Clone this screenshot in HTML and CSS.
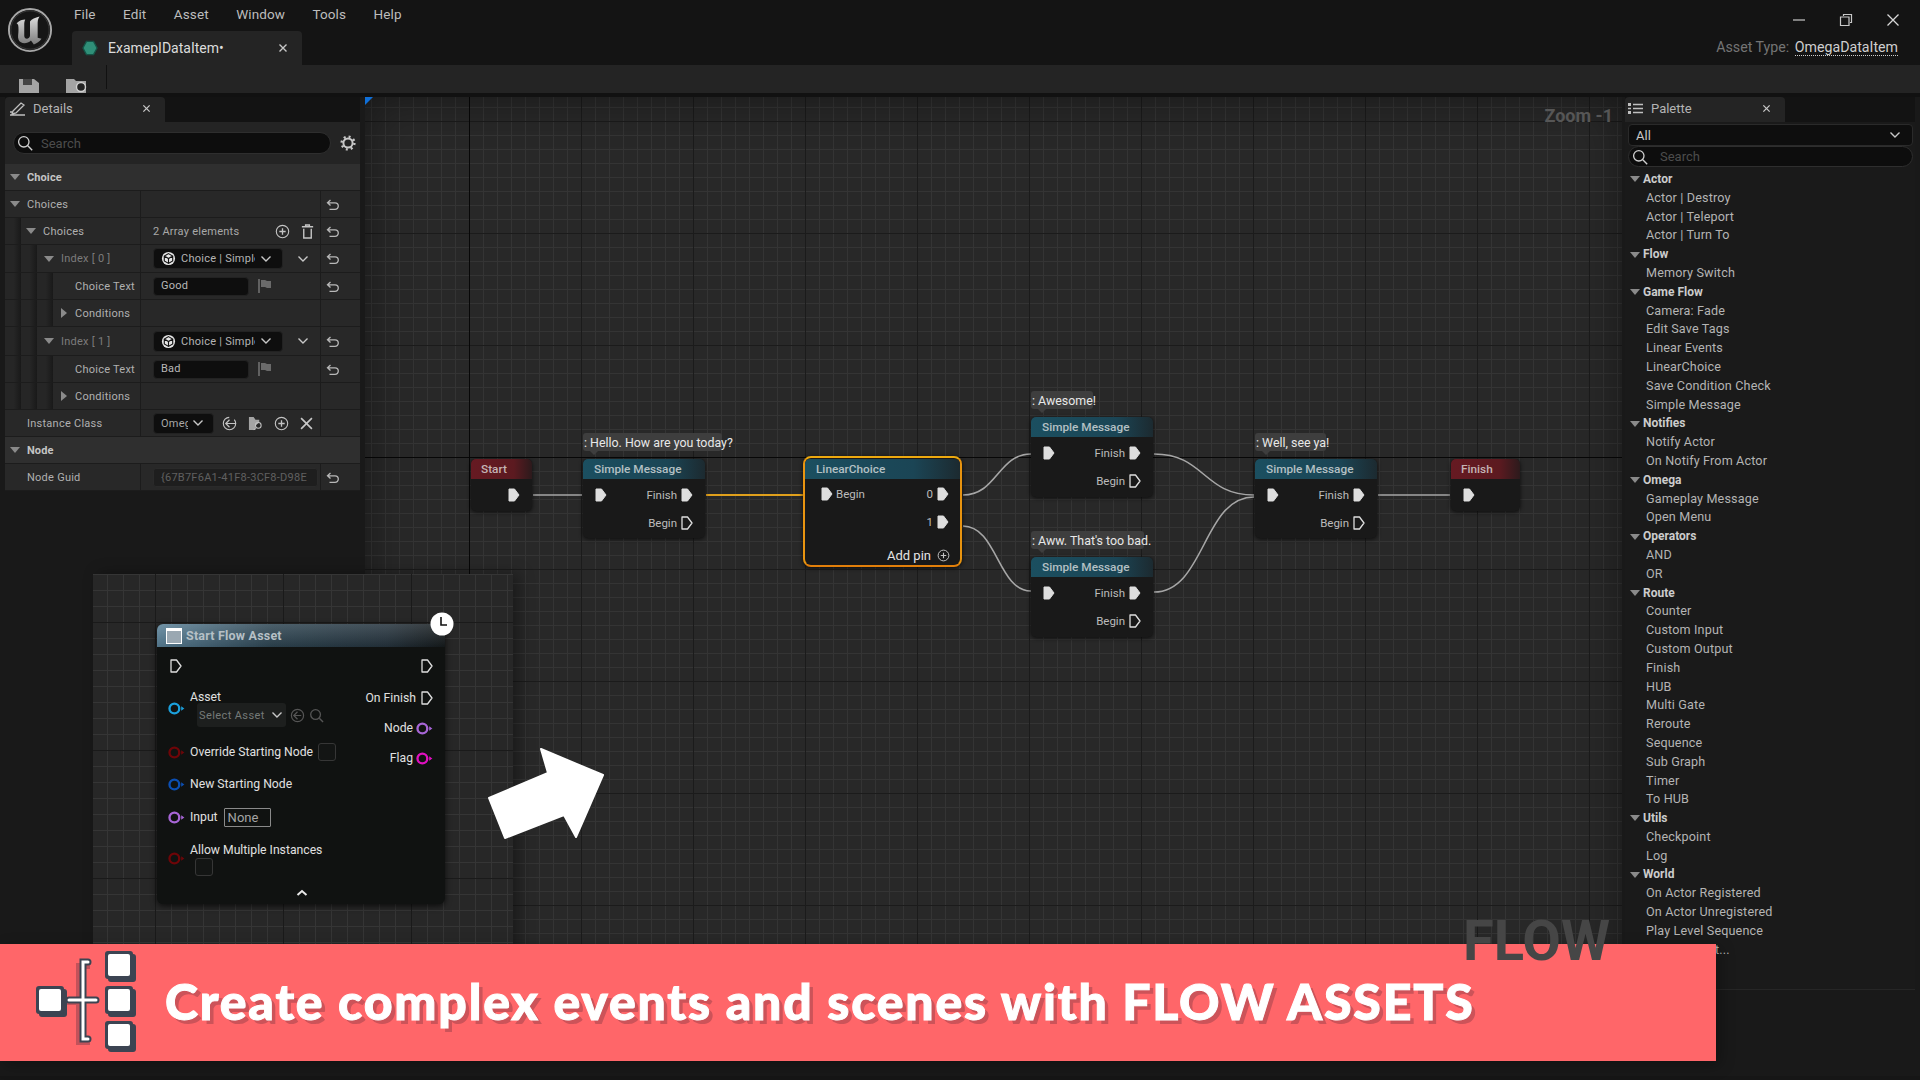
FILE: index.html
```html
<!DOCTYPE html>
<html lang="en">
<head>
<meta charset="utf-8">
<title>ExamepIDataItem</title>
<link rel="stylesheet" href="styles.css">
</head>
<body>
<svg class="defs" aria-hidden="true">
  <defs><linearGradient id="ug" x1="0" y1="0" x2="0" y2="1"><stop offset="0" stop-color="#dcdcdc"/><stop offset="1" stop-color="#7c7c7c"/></linearGradient></defs>
  <symbol id="exec" viewBox="0 0 12 14"><path d="M1 1h5.5L11 7l-4.5 6H1z" fill="#dedede" stroke="#dedede" stroke-linejoin="round"/></symbol>
  <symbol id="execo" viewBox="0 0 12 14"><path d="M1 1h5.5L11 7l-4.5 6H1z" fill="none" stroke="#dedede" stroke-width="1.3" stroke-linejoin="round"/></symbol>
  <symbol id="data" viewBox="0 0 16 14"><circle cx="6" cy="7" r="4.6" fill="none" stroke="currentColor" stroke-width="2.2"/><path d="M12.4 4.8 15.4 7l-3 2.2z" fill="currentColor"/></symbol>
  <symbol id="reset" viewBox="0 0 14 12"><path d="M4.5 1 1.5 3.8l3 2.8M1.8 3.8H9a3.2 3.2 0 0 1 0 6.6H3.5" fill="none" stroke="#b8b8b8" stroke-width="1.3"/></symbol>
  <symbol id="down" viewBox="0 0 10 10"><path d="M0 2h10L5 8z" fill="#8a8a8a"/></symbol>
  <symbol id="right" viewBox="0 0 10 10"><path d="M2 0v10l6-5z" fill="#8a8a8a"/></symbol>
  <symbol id="chev" viewBox="0 0 12 8"><path d="M1.5 1.5 6 6l4.5-4.5" fill="none" stroke="#c8c8c8" stroke-width="1.4"/></symbol>
  <symbol id="plus" viewBox="0 0 16 16"><circle cx="8" cy="8" r="6.6" fill="none" stroke="#c4c4c4" stroke-width="1.2"/><path d="M8 4.6v6.8M4.6 8h6.8" stroke="#c4c4c4" stroke-width="1.4"/></symbol>
  <symbol id="search" viewBox="0 0 16 16"><circle cx="6.8" cy="6.8" r="5.2" fill="none" stroke="#d0d0d0" stroke-width="1.3"/><path d="m10.8 10.8 4.4 4.4" stroke="#d0d0d0" stroke-width="1.4"/></symbol>
  <symbol id="cube" viewBox="0 0 16 16"><circle cx="8" cy="8" r="7" fill="#e6e6e6"/><path d="M8 2.8 12.5 5.4v5.2L8 13.2l-4.5-2.6V5.4zM3.5 5.4 8 8l4.5-2.6M8 8v5.2" fill="none" stroke="#111" stroke-width="1.2"/></symbol>
  <symbol id="flag" viewBox="0 0 14 14"><path d="M1 0v14" stroke="#9a9a9a"/><path d="M3 1h4l2 1h4v7H9L7 8H3z" fill="#6a6a6a"/></symbol>
  <symbol id="close" viewBox="0 0 10 10"><path d="m1.5 1.5 7 7m0-7-7 7" stroke="#c8c8c8" stroke-width="1.4"/></symbol>
</svg>

<div class="app">
  <header class="topbar">
    <div class="logo-box">
      <svg class="logo" viewBox="0 0 48 48"><circle cx="24" cy="24" r="22" fill="#161616" stroke="#a8a8a8" stroke-width="2"/><circle cx="24" cy="24" r="20" fill="none" stroke="#3a3a3a"/><path d="M10 17c3-3 6-4 9-4-1 2-1 4-1 6v11c0 3 3 4 5 2 1-1 1-2 1-3V15c2-2 5-4 10-5-2 3-2 5-2 8v14l4 1c-2 3-5 5-8 6l-3-4c-4 4-11 4-13-1-1-3 0-6 0-10 0-4 0-6-2-7z" fill="url(#ug)"/></svg>
    </div>
    <div class="top-main">
      <nav class="menu">
        <span>File</span><span>Edit</span><span>Asset</span><span>Window</span><span>Tools</span><span>Help</span>
        <div class="winctl">
          <svg viewBox="0 0 14 14"><path d="M1 7h12" stroke="#c8c8c8" stroke-width="1.2"/></svg>
          <svg viewBox="0 0 14 14"><path d="M4.5 3V1.5h8v8H11M1.5 4h8.5v8.5H1.5z" fill="none" stroke="#c8c8c8" stroke-width="1.2"/></svg>
          <svg viewBox="0 0 14 14"><path d="m1.5 1.5 11 11m0-11-11 11" stroke="#d8d8d8" stroke-width="1.3"/></svg>
        </div>
      </nav>
      <div class="tabline">
        <div class="doc-tab">
          <svg class="hex" viewBox="0 0 18 18"><path d="M5 1.5h8L17 9l-4 7.5H5L1 9z" fill="#2f8f78" stroke="#155245" stroke-width="1.5"/></svg>
          <span class="doc-name">ExamepIDataItem•</span>
          <svg class="doc-x"><use href="#close"/></svg>
        </div>
        <div class="asset-type"><span class="at-l">Asset Type:</span> <span class="at-v">OmegaDataItem</span></div>
      </div>
    </div>
  </header>

  <div class="toolbar">
    <svg class="tool-ic" viewBox="0 0 22 22"><path d="M1 3h15l5 4v15H1z" fill="#a4a4a4"/><path d="M5 3h9v6H5z" fill="#444"/></svg>
    <svg class="tool-ic ti2" viewBox="0 0 22 22"><path d="M0 3h8l2 2h10v17H0z" fill="#a4a4a4"/><circle cx="15" cy="11" r="4.5" fill="#242424" stroke="#d0d0d0" stroke-width="1.4"/></svg>
    <i class="tool-div"></i>
  </div>

  <main class="work">
    <aside class="details">
      <div class="tabstrip">
        <div class="ptab">
          <svg class="ptab-ic" viewBox="0 0 16 14"><path d="M3 9 11 1l3 2-8 8-4 1zM0 13h15M0 10h3" fill="none" stroke="#c0c0c0" stroke-width="1.3"/></svg>
          <span>Details</span>
          <svg class="ptab-x"><use href="#close"/></svg>
        </div>
      </div>
      <div class="d-search">
        <div class="searchbox sb-d"><svg class="sic"><use href="#search"/></svg><span>Search</span></div>
        <svg class="gear" viewBox="0 0 16 16"><circle cx="8" cy="8" r="4.6" fill="none" stroke="#c8c8c8" stroke-width="2"/><circle cx="8" cy="8" r="6.4" fill="none" stroke="#c8c8c8" stroke-width="2.4" stroke-dasharray="2 3"/></svg>
      </div>

      <div class="section"><svg class="ar"><use href="#down"/></svg>Choice</div>
      <div class="row">
        <div class="name"><div class="lab"><svg class="ar"><use href="#down"/></svg>Choices</div></div>
        <div class="val"></div><div class="rs"><svg class="rsi"><use href="#reset"/></svg></div>
      </div>
      <div class="row">
        <div class="name"><i class="strip"></i><div class="lab"><svg class="ar"><use href="#down"/></svg>Choices</div></div>
        <div class="val"><span class="count">2 Array elements</span><svg class="vic i-plus"><use href="#plus"/></svg>
          <svg class="vic i-trash" viewBox="0 0 14 16"><path d="M1 3h12M5 3V1h4v2M3 5v10h8V5" fill="none" stroke="#c4c4c4" stroke-width="1.5"/></svg></div>
        <div class="rs"><svg class="rsi"><use href="#reset"/></svg></div>
      </div>
      <div class="row row-t">
        <div class="name"><i class="strip"></i><i class="strip"></i><div class="lab dim"><svg class="ar ar-i"><use href="#down"/></svg>Index [ 0 ]</div></div>
        <div class="val"><div class="picker"><svg class="cube"><use href="#cube"/></svg><span class="clip">Choice | Simple</span><svg class="chev"><use href="#chev"/></svg></div><svg class="chev c2"><use href="#chev"/></svg></div>
        <div class="rs"><svg class="rsi"><use href="#reset"/></svg></div>
      </div>
      <div class="row">
        <div class="name"><i class="strip"></i><i class="strip"></i><i class="strip"></i><div class="lab lv3">Choice Text</div></div>
        <div class="val"><div class="textin">Good</div><svg class="flag"><use href="#flag"/></svg></div>
        <div class="rs"><svg class="rsi"><use href="#reset"/></svg></div>
      </div>
      <div class="row">
        <div class="name"><i class="strip"></i><i class="strip"></i><i class="strip"></i><div class="lab"><svg class="ar ar-r"><use href="#right"/></svg>Conditions</div></div>
        <div class="val"></div><div class="rs"></div>
      </div>
      <div class="row row-u">
        <div class="name"><i class="strip"></i><i class="strip"></i><div class="lab dim"><svg class="ar ar-i"><use href="#down"/></svg>Index [ 1 ]</div></div>
        <div class="val"><div class="picker"><svg class="cube"><use href="#cube"/></svg><span class="clip">Choice | Simple</span><svg class="chev"><use href="#chev"/></svg></div><svg class="chev c2"><use href="#chev"/></svg></div>
        <div class="rs"><svg class="rsi"><use href="#reset"/></svg></div>
      </div>
      <div class="row">
        <div class="name"><i class="strip"></i><i class="strip"></i><i class="strip"></i><div class="lab lv3">Choice Text</div></div>
        <div class="val"><div class="textin">Bad</div><svg class="flag"><use href="#flag"/></svg></div>
        <div class="rs"><svg class="rsi"><use href="#reset"/></svg></div>
      </div>
      <div class="row">
        <div class="name"><i class="strip"></i><i class="strip"></i><i class="strip"></i><div class="lab"><svg class="ar ar-r"><use href="#right"/></svg>Conditions</div></div>
        <div class="val"></div><div class="rs"></div>
      </div>
      <div class="row">
        <div class="name"><div class="lab lv0">Instance Class</div></div>
        <div class="val"><div class="combo"><span class="clip2">Omega</span><svg class="chev"><use href="#chev"/></svg></div>
          <svg class="vic i-use" viewBox="0 0 16 16"><circle cx="8" cy="8" r="6.6" fill="none" stroke="#c4c4c4" stroke-width="1.2" stroke-dasharray="30 6"/><path d="M8 4 4 8l4 4M4 8h11" fill="none" stroke="#c4c4c4" stroke-width="1.3"/></svg>
          <svg class="vic i-fold" viewBox="0 0 16 16"><path d="M1 1h5l2 3h4v3l-4 3v5H1z" fill="#a4a4a4"/><circle cx="11" cy="10" r="3" fill="none" stroke="#c4c4c4" stroke-width="1.1"/><path d="m9 12-3 3" stroke="#c4c4c4"/></svg>
          <svg class="vic i-plus2"><use href="#plus"/></svg>
          <svg class="vic i-x" viewBox="0 0 12 12"><path d="m1 1 10 10m0-10L1 11" stroke="#c8c8c8" stroke-width="1.5"/></svg></div>
        <div class="rs"></div>
      </div>
      <div class="section"><svg class="ar"><use href="#down"/></svg>Node</div>
      <div class="row">
        <div class="name"><div class="lab lv0">Node Guid</div></div>
        <div class="val"><div class="guid">{67B7F6A1-41F8-3CF8-D98E</div></div>
        <div class="rs"><svg class="rsi"><use href="#reset"/></svg></div>
      </div>
    </aside>

    <section class="graph">
      <i class="corner"></i>
      <i class="origin-x"></i><i class="origin-y"></i>
      <div class="zoom">Zoom -1</div>
      <div class="watermark">FLOW</div>
      <svg class="wires" viewBox="365 97 1257 958">
        <g fill="none" stroke="#a6a6a6" stroke-width="1.6">
          <path d="M533 495H582"/>
          <path d="M963 495C997 495 998 454 1031 454"/>
          <path d="M963 526C997 526 998 591 1031 591"/>
          <path d="M1154 454C1205 454 1203 495 1254 495"/>
          <path d="M1154 592C1205 592 1203 497 1254 497"/>
          <path d="M1378 495H1450"/>
        </g>
        <path d="M706 495H804" fill="none" stroke="#e0a01c" stroke-width="1.8"/>
      </svg>

      <div class="node n-start">
        <div class="nh red">Start</div>
        <div class="pr end"><svg class="pin"><use href="#exec"/></svg></div>
      </div>

      <div class="node n-sm1">
        <div class="bubble b1">: Hello. How are you today?</div>
        <div class="nh teal">Simple Message</div>
        <div class="pr"><svg class="pin"><use href="#exec"/></svg><span class="grow">Finish</span><svg class="pin"><use href="#exec"/></svg></div>
        <div class="pr"><span class="grow">Begin</span><svg class="pin"><use href="#execo"/></svg></div>
      </div>

      <div class="node n-lc">
        <div class="nh teal">LinearChoice</div>
        <div class="pr"><svg class="pin"><use href="#exec"/></svg><span class="lbl">Begin</span><span class="grow">0</span><svg class="pin"><use href="#exec"/></svg></div>
        <div class="pr"><span class="grow">1</span><svg class="pin"><use href="#exec"/></svg></div>
        <div class="pr addpin"><span class="grow">Add pin</span><svg class="addic"><use href="#plus"/></svg></div>
      </div>

      <div class="node n-sm2">
        <div class="bubble b2">: Awesome!</div>
        <div class="nh teal">Simple Message</div>
        <div class="pr"><svg class="pin"><use href="#exec"/></svg><span class="grow">Finish</span><svg class="pin"><use href="#exec"/></svg></div>
        <div class="pr"><span class="grow">Begin</span><svg class="pin"><use href="#execo"/></svg></div>
      </div>

      <div class="node n-sm3">
        <div class="bubble b3">: Aww. That's too bad.</div>
        <div class="nh teal">Simple Message</div>
        <div class="pr"><svg class="pin"><use href="#exec"/></svg><span class="grow">Finish</span><svg class="pin"><use href="#exec"/></svg></div>
        <div class="pr"><span class="grow">Begin</span><svg class="pin"><use href="#execo"/></svg></div>
      </div>

      <div class="node n-sm4">
        <div class="bubble b4">: Well, see ya!</div>
        <div class="nh teal">Simple Message</div>
        <div class="pr"><svg class="pin"><use href="#exec"/></svg><span class="grow">Finish</span><svg class="pin"><use href="#exec"/></svg></div>
        <div class="pr"><span class="grow">Begin</span><svg class="pin"><use href="#execo"/></svg></div>
      </div>

      <div class="node n-fin">
        <div class="nh red">Finish</div>
        <div class="pr"><svg class="pin"><use href="#exec"/></svg></div>
      </div>
    </section>

    <aside class="palette">
      <div class="tabstrip">
        <div class="ptab pt-p">
          <svg class="ptab-ic" viewBox="0 0 16 14"><path d="M0 1h3v3H0zM0 9h3v3H0z" fill="#c0c0c0"/><path d="M0 6.5h3M5 2.5h10M5 6.5h10M5 10.5h10" stroke="#c0c0c0" stroke-width="1.6"/></svg>
          <span>Palette</span>
          <svg class="ptab-x"><use href="#close"/></svg>
        </div>
      </div>
      <div class="pal-body">
        <div class="pal-combo"><span>All</span><svg class="chev"><use href="#chev"/></svg></div>
        <div class="searchbox sb-p"><svg class="sic"><use href="#search"/></svg><span>Search</span></div>
        <div class="pal-list">
          <div class="ph"><svg class="ar"><use href="#down"/></svg>Actor</div>
          <div class="pi">Actor | Destroy</div><div class="pi">Actor | Teleport</div><div class="pi">Actor | Turn To</div>
          <div class="ph"><svg class="ar"><use href="#down"/></svg>Flow</div>
          <div class="pi">Memory Switch</div>
          <div class="ph"><svg class="ar"><use href="#down"/></svg>Game Flow</div>
          <div class="pi">Camera: Fade</div><div class="pi">Edit Save Tags</div><div class="pi">Linear Events</div><div class="pi">LinearChoice</div><div class="pi">Save Condition Check</div><div class="pi">Simple Message</div>
          <div class="ph"><svg class="ar"><use href="#down"/></svg>Notifies</div>
          <div class="pi">Notify Actor</div><div class="pi">On Notify From Actor</div>
          <div class="ph"><svg class="ar"><use href="#down"/></svg>Omega</div>
          <div class="pi">Gameplay Message</div><div class="pi">Open Menu</div>
          <div class="ph"><svg class="ar"><use href="#down"/></svg>Operators</div>
          <div class="pi">AND</div><div class="pi">OR</div>
          <div class="ph"><svg class="ar"><use href="#down"/></svg>Route</div>
          <div class="pi">Counter</div><div class="pi">Custom Input</div><div class="pi">Custom Output</div><div class="pi">Finish</div><div class="pi">HUB</div><div class="pi">Multi Gate</div><div class="pi">Reroute</div><div class="pi">Sequence</div><div class="pi">Sub Graph</div><div class="pi">Timer</div><div class="pi">To HUB</div>
          <div class="ph"><svg class="ar"><use href="#down"/></svg>Utils</div>
          <div class="pi">Checkpoint</div><div class="pi">Log</div>
          <div class="ph"><svg class="ar"><use href="#down"/></svg>World</div>
          <div class="pi">On Actor Registered</div><div class="pi">On Actor Unregistered</div><div class="pi">Play Level Sequence</div><div class="pi">Spawn Event...</div>
        </div>
      </div>
    </aside>
  </main>

  <div class="inset">
    <div class="fnode">
      <div class="fh">
        <i class="fh-ic"></i><span>Start Flow Asset</span>
      </div>
      <svg class="clock" viewBox="0 0 24 24"><circle cx="12" cy="12" r="11.5" fill="#fff"/><path d="M11 5v8h6" fill="none" stroke="#111" stroke-width="1.6"/></svg>
      <div class="fbody">
        <div class="fcol">
          <div class="fr r1"><svg class="pin p-l"><use href="#execo"/></svg></div>
          <div class="fr r2"><svg class="dpin c-cy"><use href="#data"/></svg>
            <div class="stack"><span>Asset</span>
              <div class="selrow"><div class="sel">Select Asset<svg class="chev"><use href="#chev"/></svg></div>
                <svg class="mini" viewBox="0 0 16 16"><circle cx="8" cy="8" r="6.5" fill="none" stroke="#555" stroke-width="1.3"/><path d="M8 4 4 8l4 4M4 8h8" fill="none" stroke="#555" stroke-width="1.3"/></svg>
                <svg class="mini" viewBox="0 0 16 16"><circle cx="7" cy="7" r="5.2" fill="none" stroke="#555" stroke-width="1.4"/><path d="m11 11 4 4" stroke="#555" stroke-width="1.5"/></svg></div>
            </div></div>
          <div class="fr r3"><svg class="dpin c-rd"><use href="#data"/></svg><span>Override Starting Node</span><i class="check ck1"></i></div>
          <div class="fr r4"><svg class="dpin c-bl"><use href="#data"/></svg><span>New Starting Node</span></div>
          <div class="fr r5"><svg class="dpin c-pu"><use href="#data"/></svg><span>Input</span><div class="nonebox">None</div></div>
          <div class="fr r6"><svg class="dpin c-rd"><use href="#data"/></svg>
            <div class="stack"><span>Allow Multiple Instances</span><i class="check ck2"></i></div></div>
        </div>
        <div class="fcol fright">
          <div class="fr r1"><svg class="pin"><use href="#execo"/></svg></div>
          <div class="fr rb"><span>On Finish</span><svg class="pin"><use href="#execo"/></svg></div>
          <div class="fr rc"><span>Node</span><svg class="dpin c-pu"><use href="#data"/></svg></div>
          <div class="fr rc"><span>Flag</span><svg class="dpin c-mg"><use href="#data"/></svg></div>
        </div>
      </div>
      <svg class="fold" viewBox="0 0 12 8"><path d="M1.5 6 6 2l4.5 4" fill="none" stroke="#e8e8e8" stroke-width="2"/></svg>
    </div>
    <svg class="bigarrow" viewBox="0 0 120 95"><path d="M115 27 53 1 60 25 1 50 17 90 76 67 88 89z" fill="#fff" stroke="#fff" stroke-width="2" stroke-linejoin="round"/></svg>
  </div>

  <div class="banner">
    <svg class="ban-ic" viewBox="0 0 104 104">
      <g transform="translate(3 3)" fill="none" stroke="#c2525a" stroke-width="6"><path d="M51 12H40v76h11M16 48h28"/></g>
      <g transform="translate(3 3)" fill="#3c4452"><rect x="0" y="35" width="28" height="28" rx="3"/><rect x="69" y="0" width="28" height="28" rx="3"/><rect x="69" y="35" width="28" height="28" rx="3"/><rect x="69" y="70" width="28" height="28" rx="3"/></g>
      <path d="M52 11H47v77h5M33 49h27" fill="none" stroke="#3c4452" stroke-width="7" stroke-linecap="round"/>
      <path d="M52 11H47v77h5M33 49h27" fill="none" stroke="#fff" stroke-width="3" stroke-linecap="round"/>
      <g fill="#3c4452"><rect x="0" y="35" width="28" height="28" rx="3"/><rect x="69" y="0" width="28" height="28" rx="3"/><rect x="69" y="35" width="28" height="28" rx="3"/><rect x="69" y="70" width="28" height="28" rx="3"/></g>
      <g fill="#fff"><rect x="3" y="38" width="22" height="22" rx="2"/><rect x="72" y="3" width="22" height="22" rx="2"/><rect x="72" y="38" width="22" height="22" rx="2"/><rect x="72" y="73" width="22" height="22" rx="2"/></g>
    </svg>
    <div class="ban-text">Create complex events and scenes with FLOW ASSETS</div>
  </div>
</div>
</body>
</html>
```

FILE: styles.css
```css
* { box-sizing: border-box; }
html, body { margin: 0; padding: 0; background: #161616; }
body { width: 1920px; height: 1080px; overflow: hidden; font-family: Roboto, "Liberation Sans", sans-serif; color: #c0c0c0; }
.defs { position: absolute; width: 0; height: 0; }
.app { position: relative; width: 1920px; height: 1080px; overflow: hidden; background: #161616; }

/* top bar */
.topbar { display: flex; height: 65px; background: #141414; }
.logo-box { width: 60px; display: flex; justify-content: flex-end; padding-top: 7px; padding-right: 7px; }
.logo { width: 46px; height: 46px; }
.top-main { flex: 1; display: flex; flex-direction: column; margin-left: 12px; }
.menu { height: 31px; display: flex; align-items: flex-start; gap: 27.5px; font-size: 13.5px; letter-spacing: .1px; line-height: 28px; color: #bdbdbd; padding-left: 2px; }
.winctl { margin-left: auto; display: flex; gap: 33px; padding: 13px 20px 0 0; }
.winctl svg { width: 14px; height: 14px; }
.tabline { flex: 1; display: flex; justify-content: space-between; }
.doc-tab { width: 230px; height: 34px; background: #242424; border-radius: 4px 4px 0 0; display: flex; align-items: center; padding-left: 10px; }
.hex { width: 16px; height: 16px; }
.doc-name { margin-left: 10px; font-size: 14px; color: #dcdcdc; flex: 1; }
.doc-x { width: 10px; height: 10px; margin-right: 14px; }
.asset-type { font-size: 14.2px; line-height: 33px; padding-right: 22px; }
.at-l { color: #747474; }
.at-v { color: #cfcfcf; border-bottom: 1px dotted #cfcfcf; margin-left: 2px; }

.toolbar { height: 28px; background: #242424; display: flex; padding-left: 18px; overflow: hidden; position: relative; }
.tool-ic { width: 22px; height: 22px; margin-top: 11px; }
.ti2 { margin-left: 26px; }
.tool-div { width: 1px; height: 24px; background: #111; margin-left: 18px; }

/* workspace */
.work { display: grid; grid-template-columns: 360px 1257px 1fr; height: 983px; padding-top: 4px; background: linear-gradient(#111 0 4px, #191919 4px); }
.details { padding-left: 5px; }
.tabstrip { height: 25px; background: #131313; }
.ptab { width: 160px; height: 25px; background: #242424; border-radius: 4px 4px 0 0; display: flex; align-items: center; padding: 0 11px 2px 5px; font-size: 13px; color: #b4b4b4; }
.ptab span { margin-left: 7px; flex: 1; }
.ptab-ic { width: 16px; height: 14px; }
.ptab-x { width: 9px; height: 9px; margin-right: 3px; }
.d-search { height: 42px; background: #242424; display: flex; align-items: center; padding: 0 0 0 8px; }
.searchbox { display: flex; align-items: center; background: #0d0d0d; border: 1px solid #2e2e2e; border-radius: 11px; font-size: 13px; color: #4c4c4c; }
.sb-d { width: 318px; height: 22px; padding-left: 3px; }
.sic { width: 16px; height: 16px; margin-right: 8px; }
.gear { width: 16px; height: 16px; margin-left: 9px; }
.section { height: 27px; background: #2f2f2f; border-bottom: 1px solid #1c1c1c; display: flex; align-items: center; padding-left: 5px; font-size: 11px; font-weight: 700; color: #c4c4c4; letter-spacing: .1px; }
.ar { width: 10px; height: 10px; margin-right: 7px; flex: none; }
.ar-r { margin-left: 1px; margin-right: 6px; }
.ar-i { margin-left: 2px; margin-right: 7px; }

.row { display: grid; grid-template-columns: 136px 180px 39px; height: 27px; border-bottom: 1px solid #1c1c1c; background: #282828; font-size: 11px; letter-spacing: .25px; }
.row-t { height: 28px; }
.row-u { height: 29px; }
.name { display: flex; border-right: 1px solid #1c1c1c; min-width: 0; }
.strip { width: 16px; flex: none; background: linear-gradient(90deg, #262626 55%, #191919); }
.lab { flex: 1; display: flex; align-items: center; padding-left: 5px; white-space: nowrap; color: #b0b0b0; min-width: 0; }
.lv0 { padding-left: 22px; }
.lv3 { padding-left: 22px; }
.dim { color: #7c7c7c; }
.val { display: flex; align-items: center; padding-left: 12px; border-right: 1px solid #1c1c1c; position: relative; min-width: 0; }
.rs { display: flex; align-items: center; padding-left: 4px; }
.rsi { width: 14px; height: 12px; margin: 1px 0 0 1px; }
.count { color: #a8a8a8; width: 122px; }
.vic { width: 15px; height: 15px; flex: none; }
.i-trash { margin-left: 10px; }
.picker { width: 130px; height: 21px; background: #0e0e0e; border: 1px solid #222; border-radius: 4px; display: flex; align-items: center; padding-left: 7px; color: #b4b4b4; }
.cube { width: 15px; height: 15px; flex: none; margin-right: 5px; }
.clip { width: 74px; overflow: hidden; white-space: nowrap; }
.chev { width: 12px; height: 8px; flex: none; margin-left: 5px; }
.c2 { margin-left: 14px; }
.textin { width: 96px; height: 19px; background: #0e0e0e; border: 1px solid #222; border-radius: 4px; padding-left: 7px; line-height: 15px; color: #b8b8b8; font-size: 11px; }
.flag { width: 14px; height: 14px; margin-left: 9px; }
.combo { width: 61px; height: 21px; background: #0e0e0e; border: 1px solid #222; border-radius: 4px; display: flex; align-items: center; padding-left: 7px; color: #a8a8a8; }
.clip2 { width: 27px; overflow: hidden; white-space: nowrap; }
.combo .chev { margin-left: 4px; }
.i-use { margin-left: 8px; }
.i-fold { margin-left: 11px; }
.i-plus2 { margin-left: 11px; }
.i-x { margin-left: 11px; width: 13px; height: 13px; }
.guid { width: 165px; height: 19px; background: #1e1e1e; border: 1px solid #2a2a2a; border-radius: 3px; padding-left: 7px; line-height: 17px; color: #606060; font-size: 11px; overflow: hidden; white-space: nowrap; }

/* graph */
.graph { position: relative; height: 958px; overflow: hidden; margin-left: 5px; margin-right: -5px; background-color: #282828;
  background-image:
    linear-gradient(90deg, #1b1b1b 1px, transparent 1px),
    linear-gradient(#1b1b1b 1px, transparent 1px),
    linear-gradient(90deg, #343434 1px, transparent 1px),
    linear-gradient(#343434 1px, transparent 1px);
  background-size: 112px 112px, 112px 112px, 14px 14px, 14px 14px;
  background-position: 104px 0, 0 24px, 6px 0, 0 10px; }
.graph::after { content: ""; position: absolute; inset: 0; box-shadow: inset 0 0 45px rgba(0,0,0,.45); pointer-events: none; }
.corner { position: absolute; left: 0; top: 0; width: 0; height: 0; border-top: 8px solid #0f6fd8; border-right: 8px solid transparent; z-index: 2; }
.origin-x { position: absolute; left: 104px; top: 0; bottom: 0; width: 1px; background: #070707; }
.origin-y { position: absolute; top: 360px; left: 0; right: 0; height: 1px; background: #070707; }
.zoom { position: absolute; right: 9px; top: 8px; font-size: 18px; font-weight: 700; color: #565656; z-index: 3; }
.watermark { position: absolute; left: 1098px; top: 816px; font-size: 56px; line-height: 56px; font-weight: 700; color: #464646; z-index: 1; }
.wires { position: absolute; left: 0; top: 0; width: 1257px; height: 958px; }

.node { position: absolute; background: #191919; border-radius: 5px; box-shadow: 0 1px 4px rgba(0,0,0,.7); font-size: 11.5px; color: #bcbcbc; z-index: 2; }
.nh { height: 20px; border-radius: 5px 5px 0 0; margin-bottom: 2px; padding-left: 11px; font-size: 11.8px; font-weight: 500; line-height: 21px; color: #b4c0c4; }
.teal { background: linear-gradient(90deg, #1b4f60, #1b4555 70%, #1c2a30); }
.red { background: linear-gradient(90deg, #661a22, #5c1a20 70%, #2c1a1c); color: #c4b4b4; padding-left: 10px; }
.pr { height: 28px; display: flex; align-items: center; padding: 0 12px; }
.pr.end { justify-content: flex-end; padding-right: 12px; }
.pin { width: 12px; height: 14px; flex: none; }
.grow { flex: 1; text-align: right; padding-right: 4px; }
.lbl { margin-left: 3px; }
.n-start { left: 106px; top: 362px; width: 61px; height: 52px; }
.n-sm1 { left: 218px; top: 362px; width: 122px; height: 79px; }
.n-lc { left: 438px; top: 359px; width: 159px; height: 111px; border: 2px solid; border-color: #eda90f #e89410 #e27f0a; border-radius: 8px; padding-top: 1px; }
.n-lc .nh { margin-bottom: 1px; }
.n-lc .pr { padding: 0 11px 0 16px; }
.addpin { height: 33px; }
.n-lc .addpin { padding-top: 6px; padding-right: 10px; font-size: 13px; color: #e4e4e4; }
.addic { width: 13px; height: 13px; flex: none; margin-left: 2px; }
.n-sm2 { left: 666px; top: 320px; width: 122px; height: 80px; }
.n-sm3 { left: 666px; top: 460px; width: 122px; height: 80px; }
.n-sm4 { left: 890px; top: 362px; width: 122px; height: 79px; }
.n-fin { left: 1086px; top: 362px; width: 69px; height: 52px; }
.bubble { position: absolute; left: 0; top: -26px; height: 18px; background: #3e3e3e; border-radius: 3px; padding-left: 1px; font-size: 12.4px; line-height: 19px; color: #e8e8e8; white-space: nowrap; }
.bubble::after { content: ""; position: absolute; left: 7px; top: 18px; border: 4px solid transparent; border-top-color: #3e3e3e; border-bottom: 0; }
.b1 { width: 139px; }
.b2 { width: 62px; }
.b3 { width: 113px; }
.b4 { width: 71px; }

/* palette */
.palette { padding-left: 5px; margin-left: 3px; margin-right: 5px; }
.pt-p { width: 160px; padding-left: 3px; }
.pal-body { height: 868px; background: #1a1a1a; padding: 2px 0 0 3px; border-bottom: 1px solid #262626; }
.pal-combo { width: 285px; height: 22px; background: #0e0e0e; border: 1px solid #2a2a2a; border-radius: 4px; display: flex; align-items: center; justify-content: space-between; padding: 0 11px 0 7px; font-size: 13px; color: #c8c8c8; }
.sb-p { width: 285px; height: 21px; padding-left: 3px; }
.sb-p .sic { margin-right: 12px; }
.pal-list { padding-top: 3px; font-size: 12.6px; color: #b4b4b4; }
.ph { height: 18.8px; line-height: 18.8px; display: flex; align-items: center; font-weight: 700; color: #cccccc; font-size: 12px; padding-left: 2px; white-space: nowrap; }
.ph .ar { margin-right: 3px; }
.pi { height: 18.8px; line-height: 18.8px; padding-left: 18px; white-space: nowrap; letter-spacing: .15px; }

/* inset */
.inset { position: absolute; left: 93px; top: 574px; width: 420px; height: 400px; box-shadow: 6px 0 14px rgba(0,0,0,.35); background-color: #272727;
  background-image:
    linear-gradient(90deg, #1a1a1a 1px, transparent 1px),
    linear-gradient(#1a1a1a 1px, transparent 1px),
    linear-gradient(90deg, #353535 1px, transparent 1px),
    linear-gradient(#353535 1px, transparent 1px);
  background-size: 128px 128px, 128px 128px, 16px 16px, 16px 16px;
  background-position: 62px 0, 0 48px, 14px 0, 0 0; }
.fnode { position: absolute; left: 64px; top: 50px; width: 288px; height: 280px; background: #101211; border-radius: 6px; box-shadow: 0 2px 6px rgba(0,0,0,.7); font-size: 12.2px; color: #e0e0e0; }
.fh { height: 23px; border-radius: 6px 6px 0 0; background: linear-gradient(rgba(255,255,255,.14), rgba(0,0,0,.12)), linear-gradient(90deg, #5b8299, #2e4552 40%, #25333d 80%, #161b1d); display: flex; align-items: center; padding-left: 9px; font-weight: 700; font-size: 12.5px; color: #b6c0c6; letter-spacing: .2px; }
.fh-ic { width: 16px; height: 16px; border: 1px solid #fff; border-top-width: 3px; background: #9aa8b2; margin-right: 4px; }
.clock { position: absolute; right: -9px; top: -12px; width: 24px; height: 24px; }
.fbody { display: flex; justify-content: space-between; padding-top: 9px; }
.fcol { display: flex; flex-direction: column; padding-left: 11px; }
.fright { padding: 0 12px 0 0; align-items: flex-end; }
.fr { display: flex; align-items: center; height: 20px; }
.r2 { height: 44px; margin-top: 10px; }
.r3 { margin-top: 12px; }
.r4 { margin-top: 12px; }
.r5 { margin-top: 13px; }
.r6 { height: 36px; margin-top: 13px; }
.rb { margin-top: 12px; }
.rc { margin-top: 10px; }
.rb span { margin-right: 5px; }
.rc span { margin-right: 3px; }
.dpin { width: 17px; height: 15px; flex: none; margin-right: 5px; }
.fright .dpin { margin-right: 0; }
.p-l { margin-left: 2px; }
.c-cy { color: #1ba0dc; }
.c-rd { color: #6e0508; }
.c-bl { color: #0b4fb4; }
.c-pu { color: #a765d6; }
.c-mg { color: #e010c0; }
.stack { display: flex; flex-direction: column; justify-content: flex-start; align-self: flex-start; }
.stack > span { line-height: 20px; height: 20px; }
.r2 .stack > span { margin-top: 1px; }
.selrow { display: flex; align-items: center; margin-left: 7px; margin-top: -4px; }
.sel { width: 89px; height: 24px; background: #1d1f1e; border-radius: 3px; display: flex; align-items: center; padding-left: 2px; color: #757a78; font-size: 11px; letter-spacing: .4px; white-space: nowrap; }
.sel .chev { margin-left: 6px; }
.mini { width: 15px; height: 15px; margin-left: 4px; }
.check { display: block; width: 18px; height: 18px; border: 1px solid #363636; border-radius: 3px; background: #131514; flex: none; }
.ck1 { margin-left: 5px; }
.ck2 { margin: -2px 0 0 5px; }
.nonebox { width: 47px; height: 19px; margin-left: 6px; border: 1px solid #8a8a8a; border-radius: 1px; padding-left: 3px; line-height: 17px; font-size: 13px; color: #a4a4a4; }
.fold { position: absolute; left: 139px; bottom: 7px; width: 12px; height: 8px; }
.bigarrow { position: absolute; left: 395px; top: 174px; width: 120px; height: 95px; }

/* banner */
.banner { position: absolute; left: 0; top: 944px; width: 1716px; height: 117px; background: #ff6669; box-shadow: 4px 4px 14px rgba(0,0,0,.3); display: flex; align-items: center; }
.ban-ic { width: 104px; height: 104px; margin-left: 36px; flex: none; }
.ban-text { margin: -4px 0 0 25px; font-family: Lato, "Liberation Sans", sans-serif; font-weight: 900; font-size: 50px; line-height: 60px; color: #fff; letter-spacing: 1.8px; -webkit-text-stroke: 1px #fff; text-shadow: 4px 4px 0 #cc5359; white-space: nowrap; }
```
